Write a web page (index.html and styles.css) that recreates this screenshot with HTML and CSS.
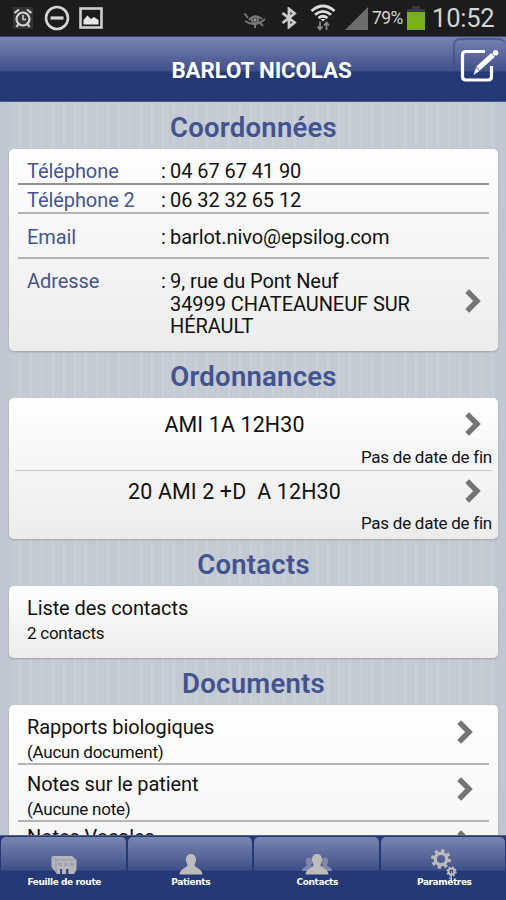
FILE: index.html
```
<!DOCTYPE html>
<html lang="fr">
<head>
    <meta charset="UTF-8">
    <meta name="viewport" content="width=device-width, initial-scale=1.0">
    <title>Fiche patient</title>
    <link rel="stylesheet" href="styles.css">
</head>
<body>
    <svg width="0" height="0" class="defs">
        <symbol id="chevron" viewBox="0 0 16 24">
            <path d="M2.2 2.2 L12 12 L2.2 21.8" fill="none" stroke="#747474" stroke-width="5.4"/>
        </symbol>
    </svg>

    <div class="status-bar">
        <svg class="icon-alarm" width="20" height="22" viewBox="0 0 20 22">
            <rect width="20" height="22" fill="#343434"/>
            <g fill="none" stroke="#d2d2d2" stroke-width="2.2">
                <circle cx="10" cy="12" r="6.5"/>
                <path d="M1.5 6 L6 2.5 M18.5 6 L14 2.5 M5.5 17 L3.5 20 M14.5 17 L16.5 20"/>
                <path d="M10 8 V12.5 H13" stroke-width="1.5"/>
            </g>
        </svg>
        <svg class="icon-block" width="26" height="26" viewBox="0 0 26 26">
            <circle cx="13" cy="13" r="11" fill="none" stroke="#d6d6d6" stroke-width="2.6"/>
            <path d="M6.5 13 H19.5" stroke="#d6d6d6" stroke-width="3.2"/>
        </svg>
        <svg class="icon-picture" width="24" height="22" viewBox="0 0 24 22">
            <rect x="1.5" y="1.5" width="21" height="19" fill="none" stroke="#cfcfcf" stroke-width="2.6"/>
            <path d="M4.5 17.5 V13 L8.5 8.5 L12 12 L15 10 L19.5 13 V17.5 Z" fill="#e6e6e6"/>
        </svg>
        <div class="spacer"></div>
        <svg class="icon-eye" width="24" height="18" viewBox="0 0 24 18">
            <g fill="none" stroke="#777" stroke-width="2">
                <path d="M2 10 Q12 17 22 8 M6 9 Q12 2 19 8"/>
                <circle cx="12" cy="9" r="3.2"/>
                <path d="M5 7 L1.5 2.5 M12 13 V17 M17 12 L20 15"/>
            </g>
            <circle cx="12" cy="9" r="1.7" fill="#999"/>
        </svg>
        <svg class="icon-bluetooth" width="16" height="22" viewBox="0 0 16 22">
            <path d="M1.5 6 L13.5 15.5 L8 20 V2 L13.5 6.5 L1.5 16" fill="none" stroke="#ccc" stroke-width="2.8"/>
        </svg>
        <svg class="icon-wifi" width="26" height="28" viewBox="0 0 26 28">
            <g fill="none" stroke="#ddd" stroke-width="2.8">
                <path d="M1.5 7 Q13 -3 24.5 7"/>
                <path d="M5 10.7 Q13 4 21 10.7"/>
                <path d="M8.5 14 Q13 10.5 17.5 14"/>
            </g>
            <path d="M10.5 15 L13 17.5 L15.5 15 Z" fill="#ddd"/>
            <path d="M10 17.5 V25 M7.5 22.5 L10 25.5 L12.5 22.5 M16.5 26 V19 M14 21.5 L16.5 18.5 L19 21.5" fill="none" stroke="#888" stroke-width="1.8"/>
        </svg>
        <svg class="icon-signal" width="23" height="23" viewBox="0 0 23 23">
            <path d="M23 0 V23 H0 Z" fill="#6c6c6c"/>
        </svg>
        <span class="battery-level">79%</span>
        <svg class="icon-battery" width="18" height="24" viewBox="0 0 18 24">
            <path d="M5 0 H13 V3 H18 V7 H0 V3 H5 Z" fill="#3a3a3a"/>
            <rect y="6" width="18" height="18" fill="#77b11c"/>
        </svg>
        <span class="clock">10:52</span>
    </div>

    <div class="header">
        <h1>BARLOT NICOLAS</h1>
        <button class="edit-button">
            <svg width="40" height="36" viewBox="0 0 40 36">
                <path d="M26 3.5 H7 Q3.5 3.5 3.5 7 V28.5 Q3.5 32 7 32 H29 Q32.5 32 32.5 28.5 V18" fill="none" stroke="#fff" stroke-width="3.2"/>
                <path d="M19 20.5 L34 7" stroke="#fff" stroke-width="5.2"/>
                <path d="M17 19.5 L20.5 23 L14.5 27 Z" fill="#fff"/>
                <circle cx="36.5" cy="4.8" r="2.8" fill="#fff"/>
            </svg>
        </button>
    </div>

    <div class="content">
        <h2>Coordonnées</h2>
        <div class="card card-details">
            <div class="detail detail-phone">
                <span class="label">Téléphone</span><span>:</span><span>04 67 67 41 90</span>
            </div>
            <div class="detail detail-phone2">
                <span class="label">Téléphone 2</span><span>:</span><span>06 32 32 65 12</span>
            </div>
            <div class="detail detail-email">
                <span class="label">Email</span><span>:</span><span>barlot.nivo@epsilog.com</span>
            </div>
            <div class="detail detail-address">
                <span class="label">Adresse</span><span>:</span>
                <span>9, rue du Pont Neuf<br>34999 CHATEAUNEUF SUR<br>HÉRAULT</span>
                <svg class="chevron" width="16" height="24"><use href="#chevron"/></svg>
            </div>
        </div>

        <h2>Ordonnances</h2>
        <div class="card card-prescriptions">
            <div class="prescription">
                <div class="prescription-name">AMI 1A 12H30</div>
                <svg class="chevron" width="16" height="24"><use href="#chevron"/></svg>
                <div class="prescription-end">Pas de date de fin</div>
            </div>
            <div class="prescription">
                <div class="prescription-name">20 AMI 2 +D&nbsp; A 12H30</div>
                <svg class="chevron" width="16" height="24"><use href="#chevron"/></svg>
                <div class="prescription-end">Pas de date de fin</div>
            </div>
        </div>

        <h2>Contacts</h2>
        <div class="card card-contacts">
            <div class="item">
                <div>
                    <div class="item-name">Liste des contacts</div>
                    <div class="item-info">2 contacts</div>
                </div>
            </div>
        </div>

        <h2>Documents</h2>
        <div class="card card-documents">
            <div class="item">
                <div>
                    <div class="item-name">Rapports biologiques</div>
                    <div class="item-info">(Aucun document)</div>
                </div>
                <svg class="chevron" width="16" height="24"><use href="#chevron"/></svg>
            </div>
            <div class="item">
                <div>
                    <div class="item-name">Notes sur le patient</div>
                    <div class="item-info">(Aucune note)</div>
                </div>
                <svg class="chevron" width="16" height="24"><use href="#chevron"/></svg>
            </div>
            <div class="item">
                <div>
                    <div class="item-name">Notes Vocales</div>
                </div>
                <svg class="chevron" width="16" height="24"><use href="#chevron"/></svg>
            </div>
        </div>
    </div>

    <div class="tabs">
        <div class="tab">
            <svg width="26" height="22" viewBox="0 0 26 22">
                <path d="M0.5 3 Q0.5 2 3 2 H21 L25.5 6 V16 L23 20 H6 L0.5 13 Z" fill="#b5b6bc"/>
                <path d="M5 6 H24 M5 6 V18 M1.5 3 L5 6" fill="none" stroke="#9497a3" stroke-width="1"/>
                <path d="M7 8.5 H11 V12 H7 Z M13 8.5 H17 V12 H13 Z M19 8.5 H23 V12 H19 Z" fill="#a0a3ad"/>
                <path d="M9 20 V15 H11 V20 M15 20 V15 H17.5 V20" fill="#38477f"/>
            </svg>
            <span>Feuille de route</span>
        </div>
        <div class="tab">
            <svg width="26" height="22" viewBox="0 0 26 22">
                <path d="M13 0 C16 0 18 2 18 5.5 C18 8 17 9 16.5 11 C16.5 14 24 14 24.5 20.5 H1.5 C2 14 9.5 14 9.5 11 C9 9 8 8 8 5.5 C8 2 10 0 13 0 Z" fill="#bcbcbd"/>
            </svg>
            <span>Patients</span>
        </div>
        <div class="tab">
            <svg width="32" height="22" viewBox="0 0 32 22">
                <path d="M8 3.5 C12 3.5 12 8 10 11 C10 13 15 13 15 17 H1 C1 13 6 13 6 11 C4 8 4 3.5 8 3.5 Z M24 3.5 C28 3.5 28 8 26 11 C26 13 31 13 31 17 H17 C17 13 22 13 22 11 C20 8 20 3.5 24 3.5 Z" fill="#7d88aa"/>
                <path d="M16 0 C19 0 21 2 21 5.5 C21 8 20 9 19.5 11 C19.5 14 27 14 27.5 20.5 H4.5 C5 14 12.5 14 12.5 11 C12 9 11 8 11 5.5 C11 2 13 0 16 0 Z" fill="#bcbcbd"/>
            </svg>
            <span>Contacts</span>
        </div>
        <div class="tab tab-gears">
            <svg width="26" height="34" viewBox="0 0 26 34">
                <g fill="none" stroke="#bcbcbd">
                    <circle cx="10" cy="10" r="5.8" stroke-width="3.4"/>
                    <circle cx="10" cy="10" r="8.5" stroke-width="3" stroke-dasharray="3.2 3.476"/>
                    <circle cx="20.5" cy="22.5" r="3" stroke-width="2.2"/>
                    <circle cx="20.5" cy="22.5" r="4.4" stroke-width="1.6" stroke-dasharray="1.7 1.756"/>
                    <path d="M20.5 22 V33" stroke-width="1"/>
                </g>
            </svg>
            <span>Paramètres</span>
        </div>
    </div>
</body>
</html>
```
FILE: styles.css
```
* {
    box-sizing: border-box;
}

body {
    margin: 0;
    width: 506px;
    height: 900px;
    overflow: hidden;
    display: flex;
    flex-direction: column;
    font-family: Roboto, "Liberation Sans", sans-serif;
    color: #111;
    background-color: #c3cad3;
}

svg {
    display: block;
    flex: none;
}

.defs {
    position: absolute;
}

/* Barre de statut */
.status-bar {
    height: 36px;
    flex: none;
    display: flex;
    align-items: center;
    padding: 0 11px 0 13px;
    background-color: #1c1c1c;
    color: #d4d4d4;
}

.icon-block {
    margin-left: 11px;
}

.icon-picture {
    margin-left: 9px;
}

.spacer {
    flex: 1;
}

.icon-eye {
    margin-top: 3px;
}

.icon-bluetooth {
    margin-left: 14px;
}

.icon-wifi {
    margin-left: 13px;
}

.icon-signal {
    margin-left: 9px;
}

.battery-level {
    width: 34px;
    margin-left: 4px;
    font-size: 17.5px;
    letter-spacing: -0.6px;
}

.icon-battery {
    margin-left: 1px;
}

.clock {
    width: 63px;
    margin-left: 7px;
    font-size: 25.5px;
    letter-spacing: -0.2px;
    white-space: nowrap;
}

/* En-tête */
.header {
    height: 66px;
    flex: none;
    display: grid;
    grid-template-columns: 54px 1fr 54px;
    background: linear-gradient(#7785b2 0, #414f8b 34px, #253978 35px, #253976 100%);
    border-top: 1px solid #3a4367;
    border-bottom: 1px solid #47557f;
}

h1 {
    grid-column: 2;
    margin: 0;
    padding-left: 17px;
    text-align: center;
    line-height: 67px;
    font-size: 22.3px;
    font-weight: 700;
    color: #fff;
    white-space: nowrap;
    letter-spacing: -0.1px;
}

.edit-button {
    height: 33px;
    margin: 1px 0 0 1px;
    padding: 10px 0 0 6px;
    display: flex;
    align-items: flex-start;
    border: none;
    border-radius: 7px 7px 0 0;
    box-shadow: inset 0 2px 1px #4c5c90, inset 2px 0 1px rgba(60, 75, 130, 0.6);
    background: linear-gradient(#7482ae 0, #414f8b 33px);
}

/* Contenu */
.content {
    flex: 1;
    min-height: 0;
    overflow: hidden;
    padding: 0 8px 0 9px;
    background:
        linear-gradient(90deg, #bfc7d2 8px, transparent 16px, transparent 490px, #bfc7d2 498px),
        repeating-linear-gradient(90deg, #c3cad2 0, #c3cad2 7px, #ccd2d8 9px, #c3cad2 11px, #c6ccd4 15px, #c2c9d2 17px, #cad0d7 20px, #c3cad2 22px);
}

h2 {
    margin: 0;
    height: 47px;
    padding-top: 2px;
    line-height: 48px;
    text-align: center;
    font-size: 27.5px;
    font-weight: 600;
    letter-spacing: 0.25px;
    color: #43538f;
}

.card {
    border-radius: 5px;
    background: linear-gradient(#fff, #ececec);
    box-shadow: 0 1px 2px rgba(120, 120, 120, 0.5);
}

.card-details {
    height: 202px;
    padding: 0 9px;
}

.detail {
    display: grid;
    grid-template-columns: 134px 9px 1fr 16px;
    padding: 0 8px 0 9px;
    font-size: 20px;
    line-height: 22.5px;
    letter-spacing: -0.07px;
    white-space: nowrap;
    border-bottom: 2px solid #b5b5b5;
}

.label {
    color: #46558f;
}

.detail-phone {
    height: 36px;
    padding-top: 11px;
    border-bottom-color: #929292;
}

.detail-phone2 {
    height: 29px;
    padding-top: 4px;
}

.detail-email {
    height: 45px;
    padding-top: 12px;
}

.detail-address {
    height: 92px;
    padding-top: 11px;
    border-bottom: none;
}

.detail-address .chevron {
    margin-top: 19px;
}

/* Ordonnances */
.card-prescriptions {
    height: 141px;
    padding: 5px 6px 0;
}

.prescription {
    height: 68px;
    display: grid;
    grid-template-columns: 439px 16px;
    grid-template-rows: 43px 22px;
    column-gap: 11px;
    align-items: center;
    border-bottom: 1px solid #c9c9c9;
}

.prescription:last-child {
    height: 66px;
    grid-template-rows: 41px 22px;
    border-bottom: none;
}

.prescription-name {
    text-align: center;
    font-size: 21.4px;
    letter-spacing: 0.15px;
}

.prescription .chevron {
    margin-bottom: 2px;
}

.prescription-end {
    grid-column: 1 / -1;
    width: 477px;
    text-align: right;
    font-size: 17px;
    line-height: 22px;
    letter-spacing: -0.25px;
}

/* Contacts et documents */
.card-contacts {
    height: 72px;
    padding: 0 9px;
}

.card-documents {
    height: 180px;
    padding: 0 9px;
    background: linear-gradient(#fff, #f3f3f3);
}

.item {
    height: 57px;
    display: flex;
    justify-content: space-between;
    padding: 7px 16px 0 9px;
    border-bottom: 2px solid #b5b5b5;
}

.item:first-child {
    height: 60px;
    padding-top: 10px;
}

.card-contacts .item,
.item:last-child {
    border-bottom: none;
}

.card-documents .item:last-child {
    padding-top: 3px;
}

.item-name {
    font-size: 20px;
    line-height: 24px;
    letter-spacing: -0.1px;
}

.item-info {
    font-size: 17px;
    line-height: 26px;
    letter-spacing: -0.25px;
}

.item .chevron {
    margin-top: 5px;
}

/* Onglets */
.tabs {
    height: 65px;
    flex: none;
    display: grid;
    grid-template-columns: repeat(4, 1fr);
    gap: 2px;
    padding: 1px 1px 0;
    background-color: #253874;
    border-top: 1px solid #555f80;
}

.tab {
    display: flex;
    flex-direction: column;
    align-items: center;
    padding: 17px 0 0 2px;
    border-radius: 5px 5px 3px 3px;
    background: linear-gradient(#7986af 0, #414f89 33px, #253977 34px);
    font-family: "DejaVu Sans", sans-serif;
    font-size: 9px;
    font-weight: 700;
    line-height: 15px;
    letter-spacing: -0.4px;
    color: #fff;
    white-space: nowrap;
}

.tab span {
    margin-top: -1px;
}

.tab-gears {
    padding-top: 12px;
    padding-left: 3px;
}

.tab-gears svg {
    margin-bottom: -7px;
}
```
